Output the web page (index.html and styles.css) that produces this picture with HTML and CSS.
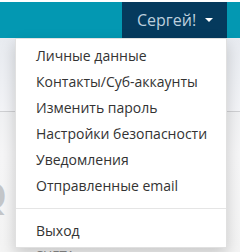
FILE: index.html
```html
<!DOCTYPE html>
<html lang="ru">
<head>
    <meta charset="UTF-8">
    <title>Профиль</title>
    <link rel="stylesheet" href="styles.css">
</head>
<body>
    <div class="topline"></div>
    <nav class="navbar">
        <div class="userMenu">
            <a class="userToggle">Сергей! <span class="caret"></span></a>
            <ul class="dropdownMenu">
                <li><a>Личные данные</a></li>
                <li><a>Контакты/Суб-аккаунты</a></li>
                <li><a>Изменить пароль</a></li>
                <li><a>Настройки безопасности</a></li>
                <li><a>Уведомления</a></li>
                <li><a>Отправленные email</a></li>
                <li class="divider"></li>
                <li><a>Выход</a></li>
            </ul>
        </div>
    </nav>
    <div class="page">
        <div class="hero"></div>
        <div class="panel">
            <div class="bigLetter">Q</div>
            <div class="panelTitle">Счета</div>
        </div>
    </div>
</body>
</html>
```

FILE: styles.css
```css
* {
    box-sizing: border-box;
}

body {
    margin: 0;
    font-family: "Open Sans", "Liberation Sans", sans-serif;
    background-color: #eceef2;
}

.topline {
    height: 2px;
    background-color: #fff;
}

.navbar {
    display: flex;
    justify-content: flex-end;
    height: 36px;
    background-color: #0398b2;
    padding-right: 13px;
}

.userMenu {
    position: relative;
    width: 105px;
    background-color: #053a5d;
}

.userToggle {
    display: flex;
    align-items: center;
    height: 36px;
    padding-left: 15px;
    font-size: 16px;
    color: #bccfdd;
}

.caret {
    display: inline-block;
    margin-left: 9px;
    width: 0;
    height: 0;
    border-top: 4px solid #fff;
    border-left: 4px solid transparent;
    border-right: 4px solid transparent;
}

.dropdownMenu {
    position: absolute;
    top: 36px;
    right: 0;
    width: 212px;
    margin: 0;
    padding: 4px 0 3px;
    list-style: none;
    background-color: #fff;
    border: 1px solid rgba(0, 0, 0, 0.12);
    box-shadow: 0 6px 14px rgba(0, 0, 0, 0.18);
    z-index: 10;
}

.dropdownMenu a {
    display: block;
    padding: 3px 20px;
    font-size: 14px;
    line-height: 20px;
    color: #333;
    white-space: nowrap;
}

.divider {
    height: 1px;
    margin: 9px 0;
    background-color: #e5e5e5;
}

.hero {
    height: 74px;
    background: linear-gradient(180deg, #e8ebf0 0%, #eef0f4 60%, #f3f4f7 100%);
    border-bottom: 1px solid #cfd0d3;
}

.panel {
    height: 140px;
    padding-top: 66px;
    background: linear-gradient(180deg, #f0f1f3 0%, #f6f6f7 30%, #f4f4f4 100%);
}

.bigLetter {
    margin-left: -22px;
    height: 36px;
    font-size: 36px;
    line-height: 36px;
    font-weight: bold;
    color: #c4c6c9;
}

.panelTitle {
    margin-top: 32px;
    padding-left: 35px;
    font-size: 13px;
    text-transform: uppercase;
    color: #8a8a8a;
}
```
